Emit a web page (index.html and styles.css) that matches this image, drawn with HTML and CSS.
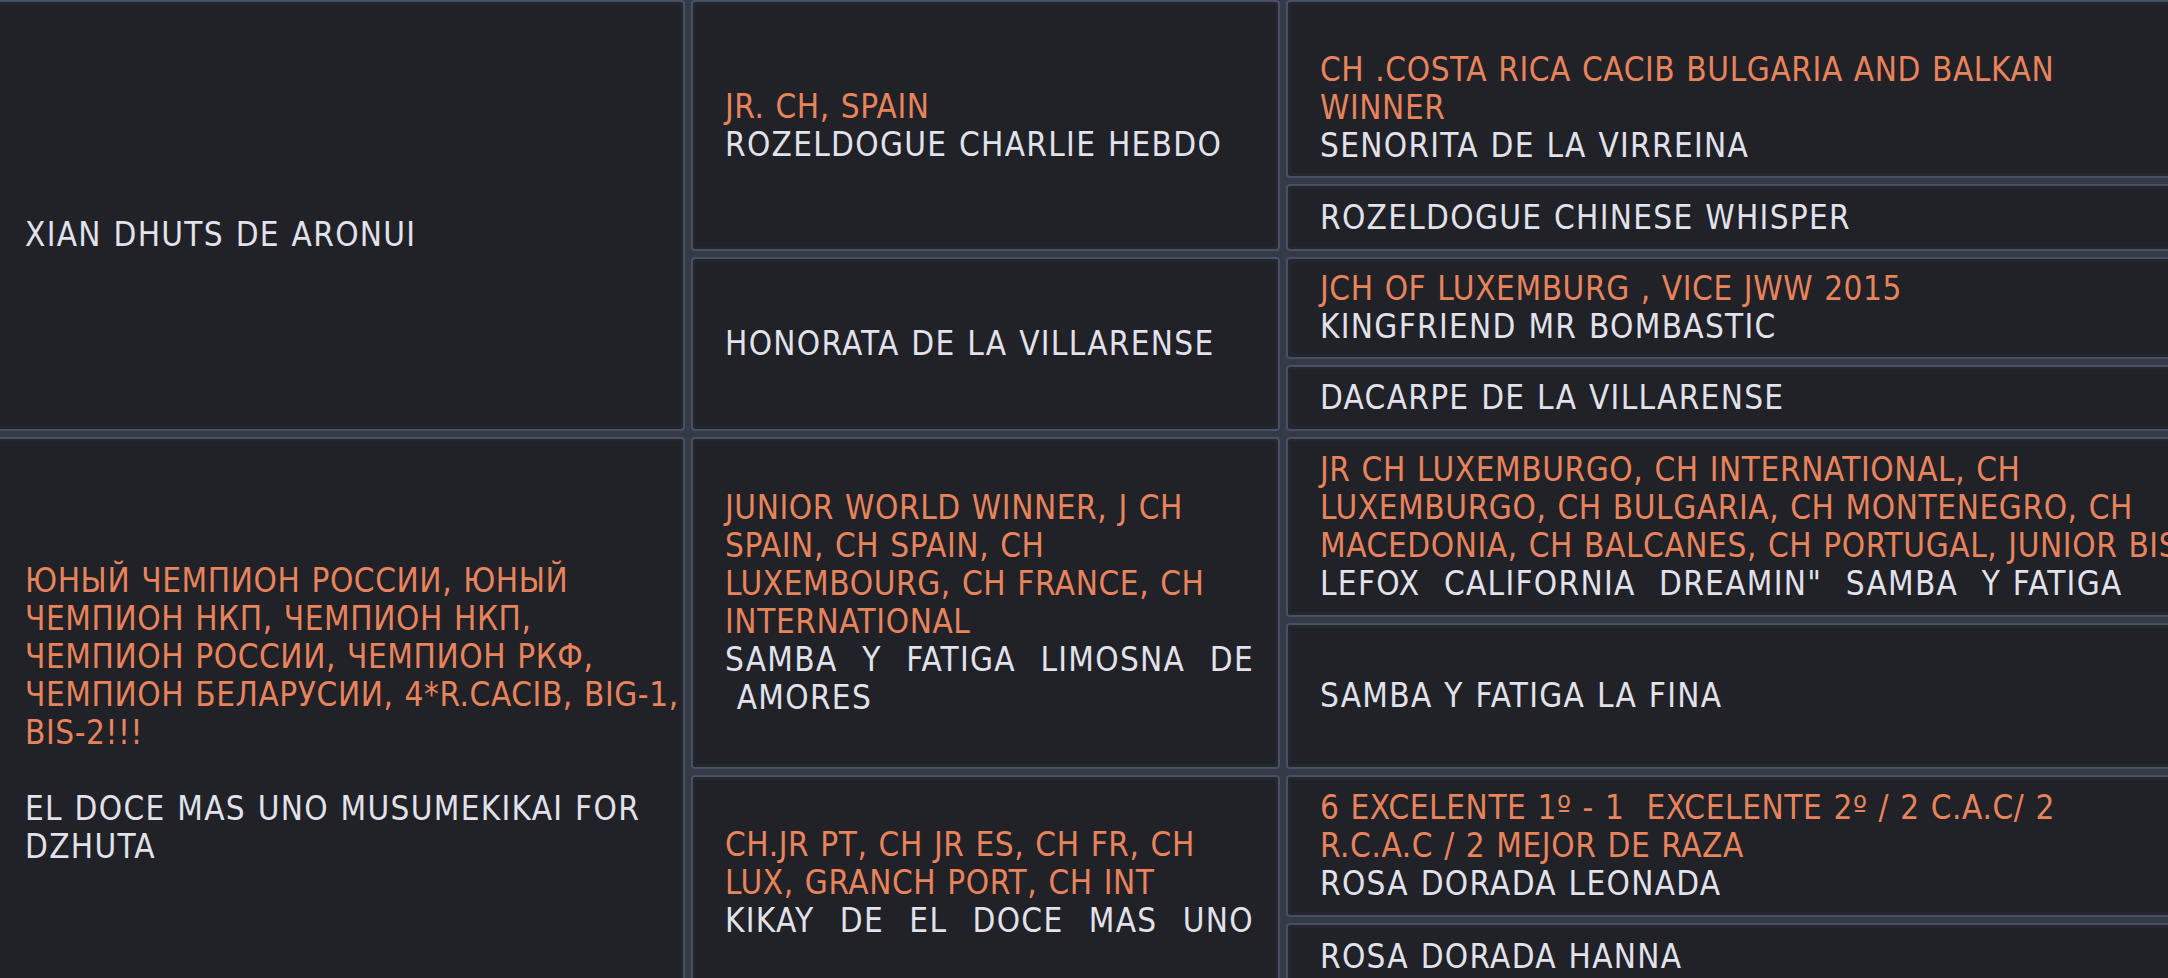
FILE: index.html
```html
<!DOCTYPE html>
<html lang="en">
<head>
<meta charset="utf-8">
<title>Pedigree</title>
<link rel="stylesheet" href="styles.css">
</head>
<body>
<div class="pedigree">
  <div class="cell c1 r1-5">
    <div class="line title">&nbsp;</div>
    <div class="line name">XIAN DHUTS DE ARONUI</div>
  </div>
  <div class="cell c2 r1-3">
    <div class="line title">JR. CH, SPAIN</div>
    <div class="line name">ROZELDOGUE CHARLIE HEBDO</div>
  </div>
  <div class="cell c3 r1">
    <div class="line title">&nbsp;</div>
    <div class="line title">CH .COSTA RICA CACIB BULGARIA AND BALKAN</div>
    <div class="line title">WINNER</div>
    <div class="line name">SENORITA DE LA VIRREINA</div>
  </div>
  <div class="cell c3 r2">
    <div class="line name">ROZELDOGUE CHINESE WHISPER</div>
  </div>
  <div class="cell c2 r3-5">
    <div class="line name">HONORATA DE LA VILLARENSE</div>
  </div>
  <div class="cell c3 r3">
    <div class="line title">JCH OF LUXEMBURG , VICE JWW 2015</div>
    <div class="line name">KINGFRIEND MR BOMBASTIC</div>
  </div>
  <div class="cell c3 r4">
    <div class="line name">DACARPE DE LA VILLARENSE</div>
  </div>

  <div class="cell c1 r5-9">
    <div class="line title">ЮНЫЙ ЧЕМПИОН РОССИИ, ЮНЫЙ</div>
    <div class="line title">ЧЕМПИОН НКП, ЧЕМПИОН НКП,</div>
    <div class="line title">ЧЕМПИОН РОССИИ, ЧЕМПИОН РКФ,</div>
    <div class="line title">ЧЕМПИОН БЕЛАРУСИИ, 4*R.CACIB, BIG-1,</div>
    <div class="line title">BIS-2!!!</div>
    <div class="line title">&nbsp;</div>
    <div class="line name">EL DOCE MAS UNO MUSUMEKIKAI FOR</div>
    <div class="line name">DZHUTA</div>
  </div>
  <div class="cell c2 r5-7">
    <div class="line title">JUNIOR WORLD WINNER, J CH</div>
    <div class="line title">SPAIN, CH SPAIN, CH</div>
    <div class="line title">LUXEMBOURG, CH FRANCE, CH</div>
    <div class="line title">INTERNATIONAL</div>
    <div class="line name just">SAMBA Y FATIGA LIMOSNA DE</div>
    <div class="line name">&nbsp;AMORES</div>
  </div>
  <div class="cell c3 r5">
    <div class="line title">JR CH LUXEMBURGO, CH INTERNATIONAL, CH</div>
    <div class="line title">LUXEMBURGO, CH BULGARIA, CH MONTENEGRO, CH</div>
    <div class="line title">MACEDONIA, CH BALCANES, CH PORTUGAL, JUNIOR BIS</div>
    <div class="line name pre">LEFOX  CALIFORNIA  DREAMIN"  SAMBA  Y FATIGA</div>
  </div>
  <div class="cell c3 r6">
    <div class="line name">SAMBA Y FATIGA LA FINA</div>
  </div>
  <div class="cell c2 r7-9">
    <div class="line title">CH.JR PT, CH JR ES, CH FR, CH</div>
    <div class="line title">LUX, GRANCH PORT, CH INT</div>
    <div class="line name just">KIKAY DE EL DOCE MAS UNO</div>
  </div>
  <div class="cell c3 r7">
    <div class="line title pre">6 EXCELENTE 1º - 1  EXCELENTE 2º / 2 C.A.C/ 2</div>
    <div class="line title">R.C.A.C / 2 MEJOR DE RAZA</div>
    <div class="line name">ROSA DORADA LEONADA</div>
  </div>
  <div class="cell c3 r8">
    <div class="line name">ROSA DORADA HANNA</div>
  </div>
</div>
</body>
</html>
```

FILE: styles.css
```css
html, body {
  margin: 0;
  padding: 0;
  overflow: hidden;
  background: #343a48;
}

.pedigree {
  display: grid;
  grid-template-columns: 694px 589px 900px;
  grid-template-rows: 178px 67px 102px 66px 180px 146px 142px 67px;
  gap: 6px;
  margin-left: -9px;
  font-family: "DejaVu Sans Condensed", "DejaVu Sans", sans-serif;
  font-stretch: semi-condensed;
  font-size: 33px;
  line-height: 38px;
  letter-spacing: 0.6px;
  word-spacing: 1px;
}

.cell {
  background: #212128;
  border: 2px solid #485063;
  border-radius: 4px;
  box-shadow: inset 0 0 0 3px #25272f;
  display: flex;
  flex-direction: column;
  justify-content: center;
  padding: 0 24px 0 32px;
  overflow: hidden;
}

.c1 { grid-column: 1; }
.c2 { grid-column: 2; }
.c3 { grid-column: 3; }

.r1 { grid-row: 1; }
.r2 { grid-row: 2; }
.r3 { grid-row: 3; }
.r4 { grid-row: 4; }
.r5 { grid-row: 5; }
.r6 { grid-row: 6; }
.r7 { grid-row: 7; }
.r8 { grid-row: 8; }
.r1-3 { grid-row: 1 / 3; }
.r3-5 { grid-row: 3 / 5; }
.r5-7 { grid-row: 5 / 7; }
.r7-9 { grid-row: 7 / 9; }
.r1-5 { grid-row: 1 / 5; }
.r5-9 { grid-row: 5 / 9; }

.line {
  white-space: nowrap;
}

.pre {
  white-space: pre;
}

.title {
  color: #e8845c;
}

.name {
  color: #e2e2ec;
  letter-spacing: 1.3px;
}

.just {
  white-space: normal;
  text-align: justify;
  text-align-last: justify;
}
```
